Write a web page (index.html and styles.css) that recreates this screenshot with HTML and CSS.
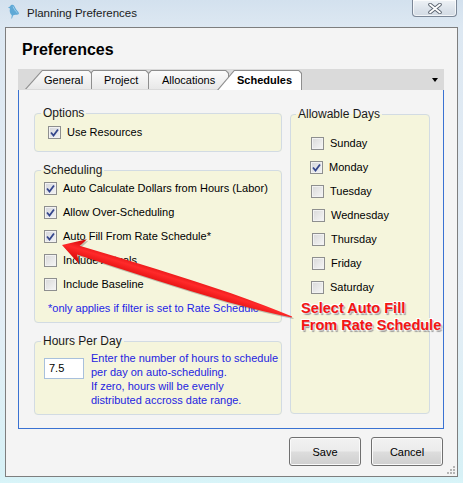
FILE: index.html
```html
<!DOCTYPE html>
<html>
<head>
<meta charset="utf-8">
<link rel="stylesheet" href="styles.css">
</head>
<body>
<div class="win">
  <div class="titlebar">
    <svg class="appicon" width="13" height="16" viewBox="0 0 13 16">
      <path d="M3 3.5 C3.5 1.5 6 1 7 2.5 C8 4 8.5 6 10.5 8 C12 9.5 12.5 11 11 11.5 C9.5 12 7.5 11.5 6 12.5 L5 15.5 L4.3 15.5 L4.8 12.3 C3 11 2.2 8 3 5.5 L1 4.6 Z" fill="#5fa9d6"/>
      <path d="M6 3.5 C7 5.5 8 8 10.5 10" stroke="#9fd0ec" stroke-width="1" fill="none"/>
    </svg>
    <span class="title">Planning Preferences</span>
    <div class="close">
      <svg width="16" height="11" viewBox="0 0 16 11">
        <path d="M3 1.5 L13 9.5 M13 1.5 L3 9.5" stroke="#5b6470" stroke-width="3.6" stroke-linecap="round"/>
        <path d="M3 1.5 L13 9.5 M13 1.5 L3 9.5" stroke="#ffffff" stroke-width="1.8" stroke-linecap="round"/>
      </svg>
    </div>
  </div>
  <div class="frame">
    <div class="client">
      <h1 class="heading">Preferences</h1>
      <div class="tabs">
        <div class="tab tab-general"><div class="tab-in">General</div></div>
        <div class="tab tab-project"><div class="tab-in">Project</div></div>
        <div class="tab tab-alloc"><div class="tab-in">Allocations</div></div>
        <div class="tab tab-sched active"><div class="tab-in">Schedules</div></div>
        <span class="tab-menu"></span>
      </div>
      <div class="panel">
        <div class="col-left">
          <fieldset class="grp">
            <legend>Options</legend>
            <div class="grp-body body-options">
              <div class="row"><span class="cb on"><svg width="11" height="11" viewBox="0 0 11 11"><path d="M2 5.5 L4.5 8.5 L9 2.5" stroke="#34468c" stroke-width="1.8" fill="none"/></svg></span><span>Use Resources</span></div>
            </div>
          </fieldset>
          <fieldset class="grp grp-sched">
            <legend>Scheduling</legend>
            <div class="grp-body body-sched">
              <div class="row"><span class="cb on"><svg width="11" height="11" viewBox="0 0 11 11"><path d="M2 5.5 L4.5 8.5 L9 2.5" stroke="#34468c" stroke-width="1.8" fill="none"/></svg></span><span>Auto Calculate Dollars from Hours (Labor)</span></div>
              <div class="row"><span class="cb on"><svg width="11" height="11" viewBox="0 0 11 11"><path d="M2 5.5 L4.5 8.5 L9 2.5" stroke="#34468c" stroke-width="1.8" fill="none"/></svg></span><span>Allow Over-Scheduling</span></div>
              <div class="row"><span class="cb on"><svg width="11" height="11" viewBox="0 0 11 11"><path d="M2 5.5 L4.5 8.5 L9 2.5" stroke="#34468c" stroke-width="1.8" fill="none"/></svg></span><span>Auto Fill From Rate Schedule*</span></div>
              <div class="row"><span class="cb"></span><span>Include Actuals</span></div>
              <div class="row"><span class="cb"></span><span>Include Baseline</span></div>
              <div class="note">*only applies if filter is set to Rate Schedule</div>
            </div>
          </fieldset>
          <fieldset class="grp grp-hours">
            <legend>Hours Per Day</legend>
            <div class="grp-body body-hours">
              <div class="hours-input">7.5</div>
              <div class="hours-text">Enter the number of hours to schedule<br>per day on auto-scheduling.<br>If zero, hours will be evenly<br>distributed accross date range.</div>
            </div>
          </fieldset>
        </div>
        <fieldset class="grp grp-days">
          <legend>Allowable Days</legend>
          <div class="grp-body body-days">
            <div class="row"><span class="cb"></span><span>Sunday</span></div>
            <div class="row shift-l"><span class="cb on"><svg width="11" height="11" viewBox="0 0 11 11"><path d="M2 5.5 L4.5 8.5 L9 2.5" stroke="#34468c" stroke-width="1.8" fill="none"/></svg></span><span>Monday</span></div>
            <div class="row"><span class="cb"></span><span>Tuesday</span></div>
            <div class="row shift-r"><span class="cb"></span><span>Wednesday</span></div>
            <div class="row shift-r"><span class="cb"></span><span>Thursday</span></div>
            <div class="row shift-r"><span class="cb"></span><span>Friday</span></div>
            <div class="row"><span class="cb"></span><span>Saturday</span></div>
          </div>
        </fieldset>
      </div>
      <div class="buttons">
        <button class="btn">Save</button>
        <button class="btn">Cancel</button>
      </div>
      <svg class="grip" width="10" height="10" viewBox="0 0 10 10">
        <rect x="7" y="1" width="2" height="2" fill="#b5b5b5"/>
        <rect x="4" y="4" width="2" height="2" fill="#b5b5b5"/>
        <rect x="7" y="4" width="2" height="2" fill="#b5b5b5"/>
        <rect x="1" y="7" width="2" height="2" fill="#b5b5b5"/>
        <rect x="4" y="7" width="2" height="2" fill="#b5b5b5"/>
        <rect x="7" y="7" width="2" height="2" fill="#b5b5b5"/>
      </svg>
    </div>
  </div>
  <svg class="arrow" width="463" height="483" viewBox="0 0 463 483">
    <defs>
      <linearGradient id="ag" x1="0" y1="0" x2="0" y2="1">
        <stop offset="0" stop-color="#c80000"/>
        <stop offset="0.45" stop-color="#ff2a2a"/>
        <stop offset="1" stop-color="#d00000"/>
      </linearGradient>
    </defs>
    <g transform="translate(63.5 246.5) rotate(17.4)">
      <path d="M0,0 L22,-13 Q19,-7 17,-4.5 Q100,-6 175,-4.5 Q215,-3 241,-0.5 L241,0.5 Q215,3.5 175,5 Q100,6 17,4.5 Q19,7 22,13 Z" fill="rgba(0,0,0,0.22)"/>
    </g>
    <g transform="translate(62 245) rotate(17.4)">
      <path d="M0,0 L22,-13 Q19,-7 17,-4.5 Q100,-6 175,-4.5 Q215,-3 241,-0.5 L241,0.5 Q215,3.5 175,5 Q100,6 17,4.5 Q19,7 22,13 Z" fill="url(#ag)"/>
    </g>
  </svg>
  <div class="callout">Select Auto Fill<br>From Rate Schedule</div>
</div>
</body>
</html>
```

FILE: styles.css
```css
* { box-sizing: border-box; }

html, body {
  margin: 0;
  padding: 0;
}

body {
  font-family: "Liberation Sans", Arial, sans-serif;
  font-size: 11px;
  color: #000;
  background: #dfe9f3;
}

.win {
  position: relative;
  width: 463px;
  height: 483px;
  overflow: hidden;
  background: linear-gradient(to bottom, #d3e1ee 0px, #dde8f2 27px, #e4edf5 300px, #d7f1f6 476px, #d8f5f9 483px);
}

/* title bar */
.titlebar {
  height: 27px;
  display: flex;
  align-items: flex-start;
}

.appicon {
  margin: 3px 0 0 7px;
  flex: none;
}

.title {
  margin-left: 7px;
  padding-top: 6px;
  font-size: 11.5px;
  line-height: 14px;
  color: #1b1b1b;
}

.close {
  margin-left: auto;
  margin-right: 6px;
  width: 45px;
  height: 17px;
  border: 1px solid #7b8797;
  border-top: none;
  border-radius: 0 0 4px 4px;
  background: linear-gradient(to bottom, #eef2f6, #dbe2ea 60%, #d3dbe4);
  box-shadow: inset 0 0 0 1px rgba(255,255,255,0.7);
  display: flex;
  align-items: center;
  justify-content: center;
}

.frame {
  padding: 0 5px 6px 5px;
}

.client {
  position: relative;
  height: 450px;
  border: 1px solid #7e7e7e;
  background: #f4f4f4;
}

.heading {
  margin: 13px 0 0 16px;
  font-size: 16px;
  line-height: 18px;
  font-weight: bold;
}

/* tabs */
.tabs {
  position: relative;
  z-index: 2;
  margin: 10px 0 -1px 12px;
  width: 426px;
  height: 21px;
  padding-left: 7px;
  background: #dadada;
  display: flex;
  align-items: flex-end;
}

.tab {
  position: relative;
  height: 19px;
  padding: 1px 1px 0 1px;
  background: #8e8e8e;
  clip-path: polygon(0 100%, 17px 0, calc(100% - 3px) 0, 100% 3px, 100% 100%);
  margin-bottom: 1px;
  flex: none;
}

.tab-in {
  height: 18px;
  line-height: 18px;
  white-space: nowrap;
  background: linear-gradient(to bottom, #fbfbfb, #e8e8e8);
  clip-path: polygon(0.5px 100%, 16.5px 0, calc(100% - 2.5px) 0, 100% 2.5px, 100% 100%);
}

.tab-general { width: 67px; z-index: 4; }
.tab-general .tab-in { padding-left: 18px; }

.tab-project { width: 73px; margin-left: -16px; z-index: 3; }
.tab-project .tab-in { padding-left: 27px; }

.tab-alloc { width: 95px; margin-left: -15px; z-index: 2; }
.tab-alloc .tab-in { padding-left: 27px; }

.tab-sched { width: 85px; margin-left: -12px; z-index: 5; }
.tab-sched .tab-in { padding-left: 19px; }

.tab.active {
  height: 20px;
  margin-bottom: 0;
}

.tab.active .tab-in {
  height: 19px;
  background: #ffffff;
  font-weight: bold;
}

.tab-menu {
  margin-left: auto;
  margin-right: 6px;
  align-self: flex-start;
  margin-top: 9px;
  width: 0;
  height: 0;
  border-left: 3.5px solid transparent;
  border-right: 3.5px solid transparent;
  border-top: 4px solid #000;
}

/* panel */
.panel {
  position: relative;
  z-index: 1;
  margin-left: 12px;
  width: 426px;
  height: 340px;
  border: 1px solid #3a72d2;
  padding: 16px 0 13px 15px;
  display: grid;
  grid-template-columns: 248px 140px;
  column-gap: 8px;
}

.col-left {
  display: flex;
  flex-direction: column;
}

.grp {
  margin: 0;
  padding: 0;
  border: 1px solid #d2dbe3;
  border-radius: 4px;
  background: #f5f5dc;
  min-width: 0;
}

.grp legend {
  margin-left: 6px;
  padding: 0 2px;
  font-size: 12px;
  line-height: 14px;
  color: #1a1a1a;
}

.grp-sched, .grp-hours { margin-top: 11px; }

.grp-days {
  margin: 1px 0 1px 0;
}
.grp-days legend { margin-left: 5px; }

.grp-body {
  display: flex;
  flex-direction: column;
}

.row {
  height: 16px;
  display: flex;
  align-items: center;
  gap: 6px;
  white-space: nowrap;
}

.body-options { padding: 4px 0 11px 13px; }

.body-sched { padding: 3px 0 7px 9px; gap: 8px; }

.note {
  margin-left: 4px;
  margin-top: 1px;
  line-height: 14px;
  color: #1f1fe6;
  white-space: nowrap;
}

.body-hours {
  padding: 3px 0 7px 9px;
  flex-direction: row;
  align-items: flex-start;
  gap: 7px;
}

.hours-input {
  margin-top: 7px;
  width: 40px;
  height: 21px;
  border: 1px solid #a8c0dc;
  background: #fff;
  padding-left: 4px;
  line-height: 19px;
  font-size: 11px;
}

.hours-text {
  line-height: 14px;
  color: #2424e0;
  white-space: nowrap;
}

.body-days { padding: 14px 0 0 20px; gap: 8px; }
.shift-l { margin-left: -1px; }
.shift-r { margin-left: 1px; }

/* checkbox */
.cb {
  flex: none;
  width: 13px;
  height: 13px;
  border: 1px solid #8e8f8f;
  background: linear-gradient(135deg, #d9d9d9, #f6f6f6);
  box-shadow: inset 0 0 0 1px #f2f2f2;
  display: flex;
  align-items: center;
  justify-content: center;
}

.cb.on {
  background: linear-gradient(135deg, #d3d5da, #f2f3f6);
}

/* buttons */
.buttons {
  display: flex;
  justify-content: flex-end;
  gap: 10px;
  margin: 8px 14px 0 0;
}

.btn {
  width: 72px;
  height: 29px;
  padding: 0;
  border: 1px solid #707070;
  border-radius: 3px;
  background: linear-gradient(to bottom, #f2f2f2 0%, #ebebeb 48%, #dddddd 52%, #cfcfcf 100%);
  box-shadow: inset 0 0 0 1px #fafafa;
  font-family: "Liberation Sans", Arial, sans-serif;
  font-size: 11px;
  color: #000;
}

.grip {
  position: absolute;
  right: 1px;
  bottom: 1px;
}

/* annotation overlay */
.arrow {
  position: absolute;
  z-index: 10;
  left: 0;
  top: 0;
  pointer-events: none;
}

.callout {
  position: absolute;
  z-index: 11;
  left: 301px;
  top: 300px;
  font-size: 14.5px;
  line-height: 17px;
  font-weight: bold;
  color: #f41414;
  white-space: nowrap;
  text-shadow: 1px 1px 0 #c9c9c9, -1px -1px 0 #ffffff, 1px -1px 0 #fff, -1px 1px 0 #fff, 1.5px 1.5px 1px #9a9a9a;
}
```
